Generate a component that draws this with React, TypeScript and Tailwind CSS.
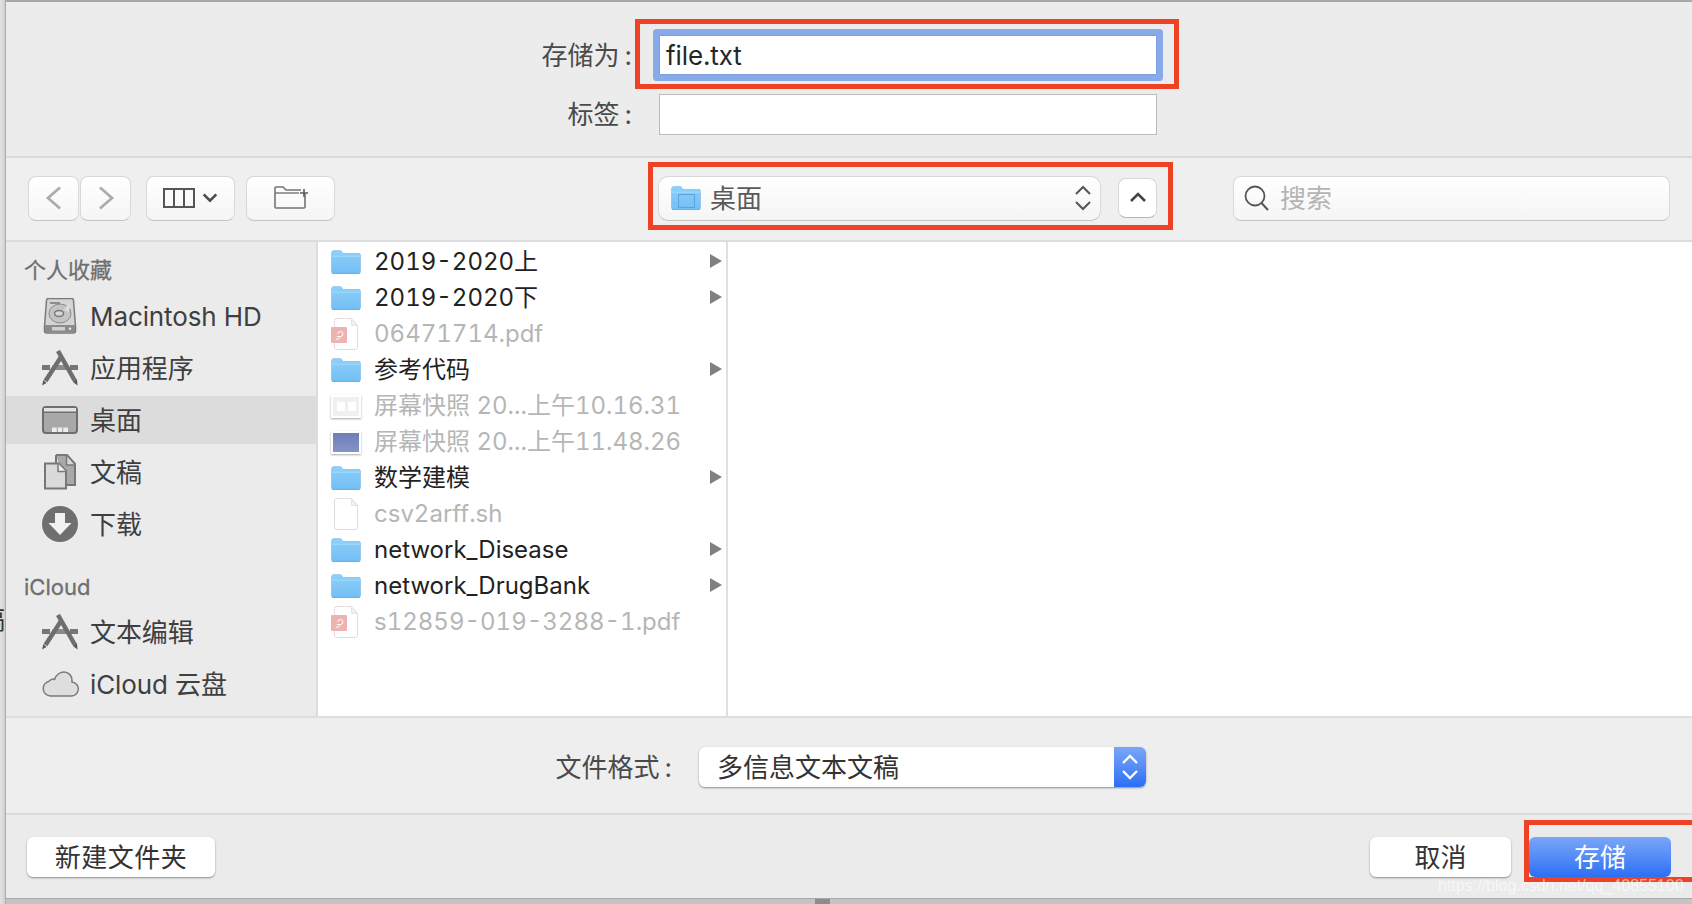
import React from "react";

const Folder = ({ w = 30, h = 25 }: { w?: number; h?: number }) => (
  <svg width={w} height={h} viewBox="0 0 30 25" className="shrink-0">
    <defs>
      <linearGradient id="fg" x1="0" y1="0" x2="0" y2="1">
        <stop offset="0" stopColor="#8ed0fa" />
        <stop offset="1" stopColor="#72bef4" />
      </linearGradient>
    </defs>
    <path d="M0.5 2.5a2 2 0 0 1 2-2h6.5a2 2 0 0 1 1.6.8l1.2 1.7h15.7a2 2 0 0 1 2 2v17a2 2 0 0 1-2 2h-25a2 2 0 0 1-2-2z" fill="#5f9fd2" />
    <path d="M0.5 2.5a2 2 0 0 1 2-2h6.5a2 2 0 0 1 1.6.8l1.2 1.7h15.7a2 2 0 0 1 2 2v16.5a2 2 0 0 1-2 2h-25a2 2 0 0 1-2-2z" fill="url(#fg)" />
    <path d="M0.5 6.2h29" stroke="#a4dafc" strokeWidth="1" />
  </svg>
);

const Doc = ({ pdf }: { pdf?: boolean }) => (
  <div className="relative w-[30px] h-[32px] shrink-0">
    <svg width="30" height="32" viewBox="0 0 30 32" className="absolute left-0 top-0">
      <path d="M3.5 2.5a2 2 0 0 1 2-2h15l6 7v22a2 2 0 0 1-2 2h-19a2 2 0 0 1-2-2z" fill="#fff" stroke="#dedede" />
      <path d="M20.5 .5v7h6z" fill="#f0f0f0" stroke="#e4e4e4" />
      {pdf && <rect x="0" y="9" width="16" height="16" rx="1" fill="#eeb3b0" />}
      {pdf && (
        <path d="M6 18.5h3.5a2.5 2.5 0 1 0-2.5-2.5M9 18.5a2 2 0 0 1-2 2.500h-2" fill="none" stroke="#fff" strokeWidth="1" />
      )}
    </svg>
  </div>
);

const Shot = ({ dark }: { dark?: boolean }) => (
  <div className="w-[30px] h-[23px] shrink-0 bg-white shadow-[0_1px_2px_rgba(0,0,0,0.35)] p-[2px] flex">
    {dark ? (
      <div className="flex-1 bg-gradient-to-b from-[#6d7fb8] to-[#8594c6]" />
    ) : (
      <div className="flex-1 bg-[#f0f0f0] flex items-center justify-center gap-[3px]">
        <div className="w-[8px] h-[9px] bg-white" />
        <div className="w-[8px] h-[9px] bg-white" />
      </div>
    )}
  </div>
);

const AppsIcon = () => (
  <svg width="38" height="36" viewBox="0 0 38 36">
    <path d="M1 17.500h8M29 17.500h8" stroke="#757575" strokeWidth="5" />
    <path d="M12 15h14l3 5H9z" fill="#8a8a8a" />
    <path d="M17 1 L34 31" stroke="#6e6e6e" strokeWidth="4.500" />
    <path d="M32 32l4.500 3.500-.5-6z" fill="#555" />
    <path d="M20 7 L4.500 31" stroke="#6e6e6e" strokeWidth="4.500" />
    <path d="M2.500 30l-1.500 5.500 4.500-2.500z" fill="#555" />
  </svg>
);

const HdIcon = () => (
  <svg width="34" height="36" viewBox="0 0 34 36">
    <path d="M3.500 2.500a2 2 0 0 1 2-2h23a2 2 0 0 1 2 2l2 26v4.500a2 2 0 0 1-2 2h-27a2 2 0 0 1-2-2v-4.500z" fill="#d4d4d4" stroke="#7a7a7a" strokeWidth="1.500" />
    <rect x="2" y="27" width="30" height="7.500" rx="1" fill="#8b8b8b" />
    <rect x="9" y="29" width="13" height="3.500" fill="#d0d0d0" />
    <circle cx="27" cy="30.800" r="1.300" fill="#e4e4e4" />
    <ellipse cx="17" cy="15.500" rx="11" ry="9.500" fill="#c4c4c4" stroke="#8a8a8a" />
    <ellipse cx="16" cy="15.500" rx="4.500" ry="3" fill="#d8d8d8" stroke="#777" strokeWidth="1.500" />
    <path d="M7 5h10" stroke="#777" strokeWidth="1.500" />
    <path d="M27 3l-6 9 5 2z" fill="#dcdcdc" />
  </svg>
);

const DesktopIcon = () => (
  <svg width="36" height="28" viewBox="0 0 36 28">
    <rect x="1" y="1" width="34" height="26" rx="3" fill="#a8a8a8" stroke="#6e6e6e" strokeWidth="2" />
    <path d="M2 6h32" stroke="#6e6e6e" strokeWidth="2" />
    <rect x="2" y="2" width="32" height="3.500" fill="#e2e2e2" />
    <rect x="10" y="21.500" width="16" height="4.500" fill="#eeeeee" />
    <path d="M15.300 21.500v4.500M20.700 21.500v4.500" stroke="#9a9a9a" strokeWidth="1" />
  </svg>
);

const DocsIcon = () => (
  <svg width="34" height="36" viewBox="0 0 34 36">
    <path d="M13 1h11l8 9v21h-9" fill="#a9a9a9" stroke="#777" strokeWidth="2" />
    <path d="M2 9.500h14l7 7.500v17.500H2z" fill="#dadada" stroke="#777" strokeWidth="2" />
    <path d="M13 1v8" stroke="#777" strokeWidth="2" />
    <path d="M23.500 2v9h8" fill="#d8d8d8" stroke="#777" strokeWidth="1.500" />
    <path d="M15 9.500v8h8" fill="#efefef" stroke="#777" strokeWidth="1.500" />
  </svg>
);

const DownloadIcon = () => (
  <svg width="36" height="36" viewBox="0 0 36 36">
    <circle cx="18" cy="18" r="18" fill="#6f6f6f" />
    <path d="M13 7h10v10h6.500L18 29 6.500 17H13z" fill="#f2f2f2" />
  </svg>
);

const CloudIcon = () => (
  <svg width="37" height="26" viewBox="0 0 37 26">
    <path d="M8.500 25a7.500 7.500 0 0 1-1.500-14.800C9 8 11 7.500 12.500 8.500 14.500 3 19 1 22 1c4.500 0 8 3.500 8 8.500 0 .5 0 1 0 1.500a7 7 0 0 1-1.500 14z" fill="#dedede" stroke="#7a7a7a" strokeWidth="1.500" />
  </svg>
);

const Chevron = ({ d, c = "#555", w = 2.5, size = 20 }: { d: string; c?: string; w?: number; size?: number }) => (
  <svg width={size} height={size} viewBox="0 0 20 20" className="shrink-0">
    <path d={d} fill="none" stroke={c} strokeWidth={w} />
  </svg>
);

const Updown = ({ c, w, width = 18, height = 28 }: { c: string; w: number; width?: number; height?: number }) => (
  <svg width={width} height={height} viewBox="0 0 18 28" className="shrink-0">
    <path d="M2 10 L9 3 L16 10M2 18 L9 25 L16 18" fill="none" stroke={c} strokeWidth={w} />
  </svg>
);

const btn =
  "flex items-center justify-center h-[45px] rounded-[8px] border border-[#d8d8d8] border-b-[#c4c4c4] bg-gradient-to-b from-[#ffffff] to-[#f5f5f5]";

const SideHeader = ({ children, className = "" }: { children: React.ReactNode; className?: string }) => (
  <div className={"h-[26px] pl-[18px] flex items-center text-[22px] text-[#6f6f6f] [-webkit-text-stroke:0.3px_#6f6f6f] " + className}>
    {children}
  </div>
);

const SideItem = ({ icon, label, active }: { icon: React.ReactNode; label: string; active?: boolean }) => (
  <div className={"h-[48px] flex items-center " + (active ? "bg-[#dcdcdc]" : "")}>
    <div className="w-[84px] flex justify-center pl-[28px] pr-[4px]">{icon}</div>
    <span className="text-[26px] tracking-[-0.1px] text-[#3f3f3f] whitespace-nowrap">{label}</span>
  </div>
);

type FileRow = { name: string; kind: "folder" | "pdf" | "doc" | "shot" | "shotd" };
const files: FileRow[] = [
  { name: "2019-2020上", kind: "folder" },
  { name: "2019-2020下", kind: "folder" },
  { name: "06471714.pdf", kind: "pdf" },
  { name: "参考代码", kind: "folder" },
  { name: "屏幕快照 20...上午10.16.31", kind: "shot" },
  { name: "屏幕快照 20...上午11.48.26", kind: "shotd" },
  { name: "数学建模", kind: "folder" },
  { name: "csv2arff.sh", kind: "doc" },
  { name: "network_Disease", kind: "folder" },
  { name: "network_DrugBank", kind: "folder" },
  { name: "s12859-019-3288-1.pdf", kind: "pdf" },
];

const Label = ({ children, width }: { children: string; width: string }) => (
  <div className={"text-right text-[26px] text-[#4a4a4a] whitespace-nowrap " + width}>
    {children}
    <span className="ml-[5px]">:</span>
  </div>
);

export default function App() {
  return (
    <div className="relative w-[1692px] h-[904px] overflow-hidden flex bg-[#c4c4c4] [font-family:Inter,'Noto_Sans_CJK_SC',sans-serif]">
      <div className="relative w-[6px] h-full bg-gradient-to-r from-[#e4e4e4] to-[#d0d0d0] border-r border-[#ababab] overflow-hidden shrink-0">
        <span className="absolute right-0 top-[606px] text-[26px] leading-[28px] text-[#333]">稿</span>
      </div>
      <div className="flex-1 flex flex-col">
        <div className="h-[2px] bg-[#a8a8a8] shrink-0" />
        <div className="h-[897px] flex flex-col shrink-0">
          {/* name fields */}
          <div className="h-[156px] bg-[#ececec] border-b-2 border-[#dadada] shrink-0">
            <div className="flex items-center pt-[33px]">
              <Label width="w-[626px]">存储为</Label>
              <div className="ml-[27px] w-[498px] h-[40px] bg-white border border-[#7f9fdc] ring-[6px] ring-[#88a9ea] rounded-[1px] flex items-center pl-[6px] text-[26px] tracking-[-0.1px] text-[#262626]">
                file.txt
              </div>
            </div>
            <div className="flex items-center mt-[19px]">
              <Label width="w-[626px]">标签</Label>
              <div className="ml-[27px] w-[498px] h-[41px] bg-white border border-[#bcbcbc]" />
            </div>
          </div>
          {/* toolbar */}
          <div className="h-[84px] bg-[#efefef] border-b-2 border-[#dcdcdc] shrink-0 flex items-center pl-[22px] pb-[2px]">
            <div className={btn + " w-[51px]"}>
              <Chevron d="M14 3 L6 10 L14 17" c="#ababab" w={1.8} size={30} />
            </div>
            <div className={btn + " w-[51px] ml-[1px]"}>
              <Chevron d="M6 3 L14 10 L6 17" c="#ababab" w={1.8} size={30} />
            </div>
            <div className={btn + " w-[89px] ml-[15px] gap-[6px]"}>
              <svg width="32" height="20" viewBox="0 0 32 20">
                <rect x="1" y="1" width="30" height="18" fill="none" stroke="#555" strokeWidth="2" />
                <path d="M11 1v18M21 1v18" stroke="#555" strokeWidth="2" />
              </svg>
              <Chevron d="M3 6 L10 13 L17 6" c="#4c4c4c" w={3} size={18} />
            </div>
            <div className={btn + " w-[89px] ml-[11px]"}>
              <svg width="36" height="26" viewBox="0 0 36 26">
                <path d="M32 9v13a1 1 0 0 1-1 1H3a1 1 0 0 1-1-1V3a1 1 0 0 1 1-1h7l3 3h15" fill="none" stroke="#747474" strokeWidth="1.600" />
                <path d="M2 8h24" stroke="#747474" strokeWidth="1.400" />
                <path d="M31 4v8M27 8h8" stroke="#5c5c5c" strokeWidth="1.600" />
              </svg>
            </div>
            <div className={btn + " w-[443px] ml-[323px] justify-start pl-[12px] pr-[8px] rounded-[10px]"}>
              <div className="relative w-[30px] h-[25px] shrink-0">
                <Folder />
                <div className="absolute left-[7px] top-[8px] w-[17px] h-[14px] border border-[#5ba3de]" />
              </div>
              <span className="ml-[9px] pt-[1px] text-[26px] text-[#5a5a5a]">桌面</span>
              <div className="ml-auto flex flex-col">
                <Updown c="#555" w={2} />
              </div>
            </div>
            <div className="ml-[17px] w-[39px] h-[40px] bg-white rounded-[8px] border border-[#d8d8d8] border-b-[#b4b4b4] flex items-center justify-center">
              <Chevron d="M3 13 L10 6 L17 13" c="#444" w={2.6} size={20} />
            </div>
            <div className={btn + " w-[437px] ml-[76px] justify-start pl-[10px]"}>
              <svg width="26" height="26" viewBox="0 0 26 26">
                <circle cx="11" cy="11" r="9.500" fill="none" stroke="#555" strokeWidth="1.800" />
                <path d="M17.500 18 L24 25" stroke="#555" strokeWidth="2" />
              </svg>
              <span className="ml-[10px] pt-[1px] text-[26px] text-[#b4b4b4]">搜索</span>
            </div>
          </div>
          {/* browser */}
          <div className="h-[474px] flex shrink-0 bg-white">
            <div className="w-[312px] shrink-0 bg-[#ebebeb] border-r-2 border-[#dcdcdc] pt-[15px]">
              <SideHeader className="mb-[9px]">个人收藏</SideHeader>
              <div className="flex flex-col gap-[4px]">
                <SideItem icon={<HdIcon />} label="Macintosh HD" />
                <SideItem icon={<AppsIcon />} label="应用程序" />
                <SideItem icon={<DesktopIcon />} label="桌面" active />
                <SideItem icon={<DocsIcon />} label="文稿" />
                <SideItem icon={<DownloadIcon />} label="下载" />
              </div>
              <SideHeader className="mt-[26px] mb-[8px]">iCloud</SideHeader>
              <div className="flex flex-col gap-[4px]">
                <SideItem icon={<AppsIcon />} label="文本编辑" />
                <SideItem icon={<CloudIcon />} label="iCloud 云盘" />
              </div>
            </div>
            <div className="w-[410px] shrink-0 border-r-2 border-[#e0e0e0] pt-[2px]">
              {files.map((f) => (
                <div key={f.name} className="h-[36px] flex items-center pl-[13px] pr-[3px]">
                  <div className="w-[43px] shrink-0 flex">
                    {f.kind === "folder" && <Folder />}
                    {f.kind === "pdf" && <Doc pdf />}
                    {f.kind === "doc" && <Doc />}
                    {f.kind === "shot" && <Shot />}
                    {f.kind === "shotd" && <Shot dark />}
                  </div>
                  <span className={"text-[24px] tabular-nums whitespace-nowrap " + (f.kind === "folder" ? "text-[#222]" : "text-[#b6b6b6]")}>
                    {f.name}
                  </span>
                  {f.kind === "folder" && (
                    <svg width="12" height="14" viewBox="0 0 12 14" className="ml-auto mr-[1px] mt-[-2px]">
                      <path d="M0 0 L12 7 L0 14z" fill="#808080" />
                    </svg>
                  )}
                </div>
              ))}
            </div>
            <div className="flex-1" />
          </div>
          {/* format */}
          <div className="h-[99px] bg-[#eeeeee] border-t-2 border-[#dedede] border-b-2 border-b-[#dcdcdc] shrink-0 flex items-center pt-[3px]">
            <Label width="w-[666px]">文件格式</Label>
            <div className="ml-[27px] w-[447px] h-[40px] bg-white rounded-[6px] shadow-[0_1px_2px_rgba(0,0,0,0.4)] flex items-center overflow-hidden">
              <span className="pl-[18px] text-[26px] text-[#333]">多信息文本文稿</span>
              <div className="ml-auto w-[32px] h-full bg-gradient-to-b from-[#7ba6f8] to-[#2a6ff5] flex flex-col items-center justify-center">
                <Updown c="#fff" w={2.4} />
              </div>
            </div>
          </div>
          {/* actions */}
          <div className="flex-1 bg-[#ebebeb] border-b border-[#a8a8a8] flex items-center pl-[21px] pr-[21px] pt-[1px]">
            <div className="w-[188px] h-[40px] bg-white rounded-[6px] shadow-[0_1px_2px_rgba(0,0,0,0.4)] flex items-center justify-center text-[26px] tracking-[0.5px] text-[#333]">
              新建文件夹
            </div>
            <div className="ml-auto w-[141px] h-[40px] bg-white rounded-[6px] shadow-[0_1px_2px_rgba(0,0,0,0.4)] flex items-center justify-center text-[26px] text-[#333]">
              取消
            </div>
            <div className="ml-[18px] w-[142px] h-[40px] rounded-[6px] bg-gradient-to-b from-[#7ba6f8] to-[#2a6ff5] flex items-center justify-center text-[26px] text-white">
              存储
            </div>
          </div>
        </div>
        <div className="flex-1 bg-[#c4c4c4] flex justify-center">
          <div className="ml-[-54px] w-[15px] bg-[#8c8c8c]" />
        </div>
      </div>
      {/* annotations */}
      <div className="absolute left-[635px] top-[19px] w-[544px] h-[70px] border-[5px] border-[#ef4123]" />
      <div className="absolute left-[648px] top-[162px] w-[525px] h-[68px] border-[5px] border-[#ef4123]" />
      <div className="absolute left-[1524px] top-[820px] w-[175px] h-[62px] border-[5px] border-[#ef4123]" />
      <div className="absolute left-[1438px] top-[876px] text-[16px] leading-[20px] text-white/60 whitespace-nowrap [font-family:'Liberation_Sans',sans-serif]">
        https://blog.csdn.net/qq_40855100
      </div>
    </div>
  );
}
